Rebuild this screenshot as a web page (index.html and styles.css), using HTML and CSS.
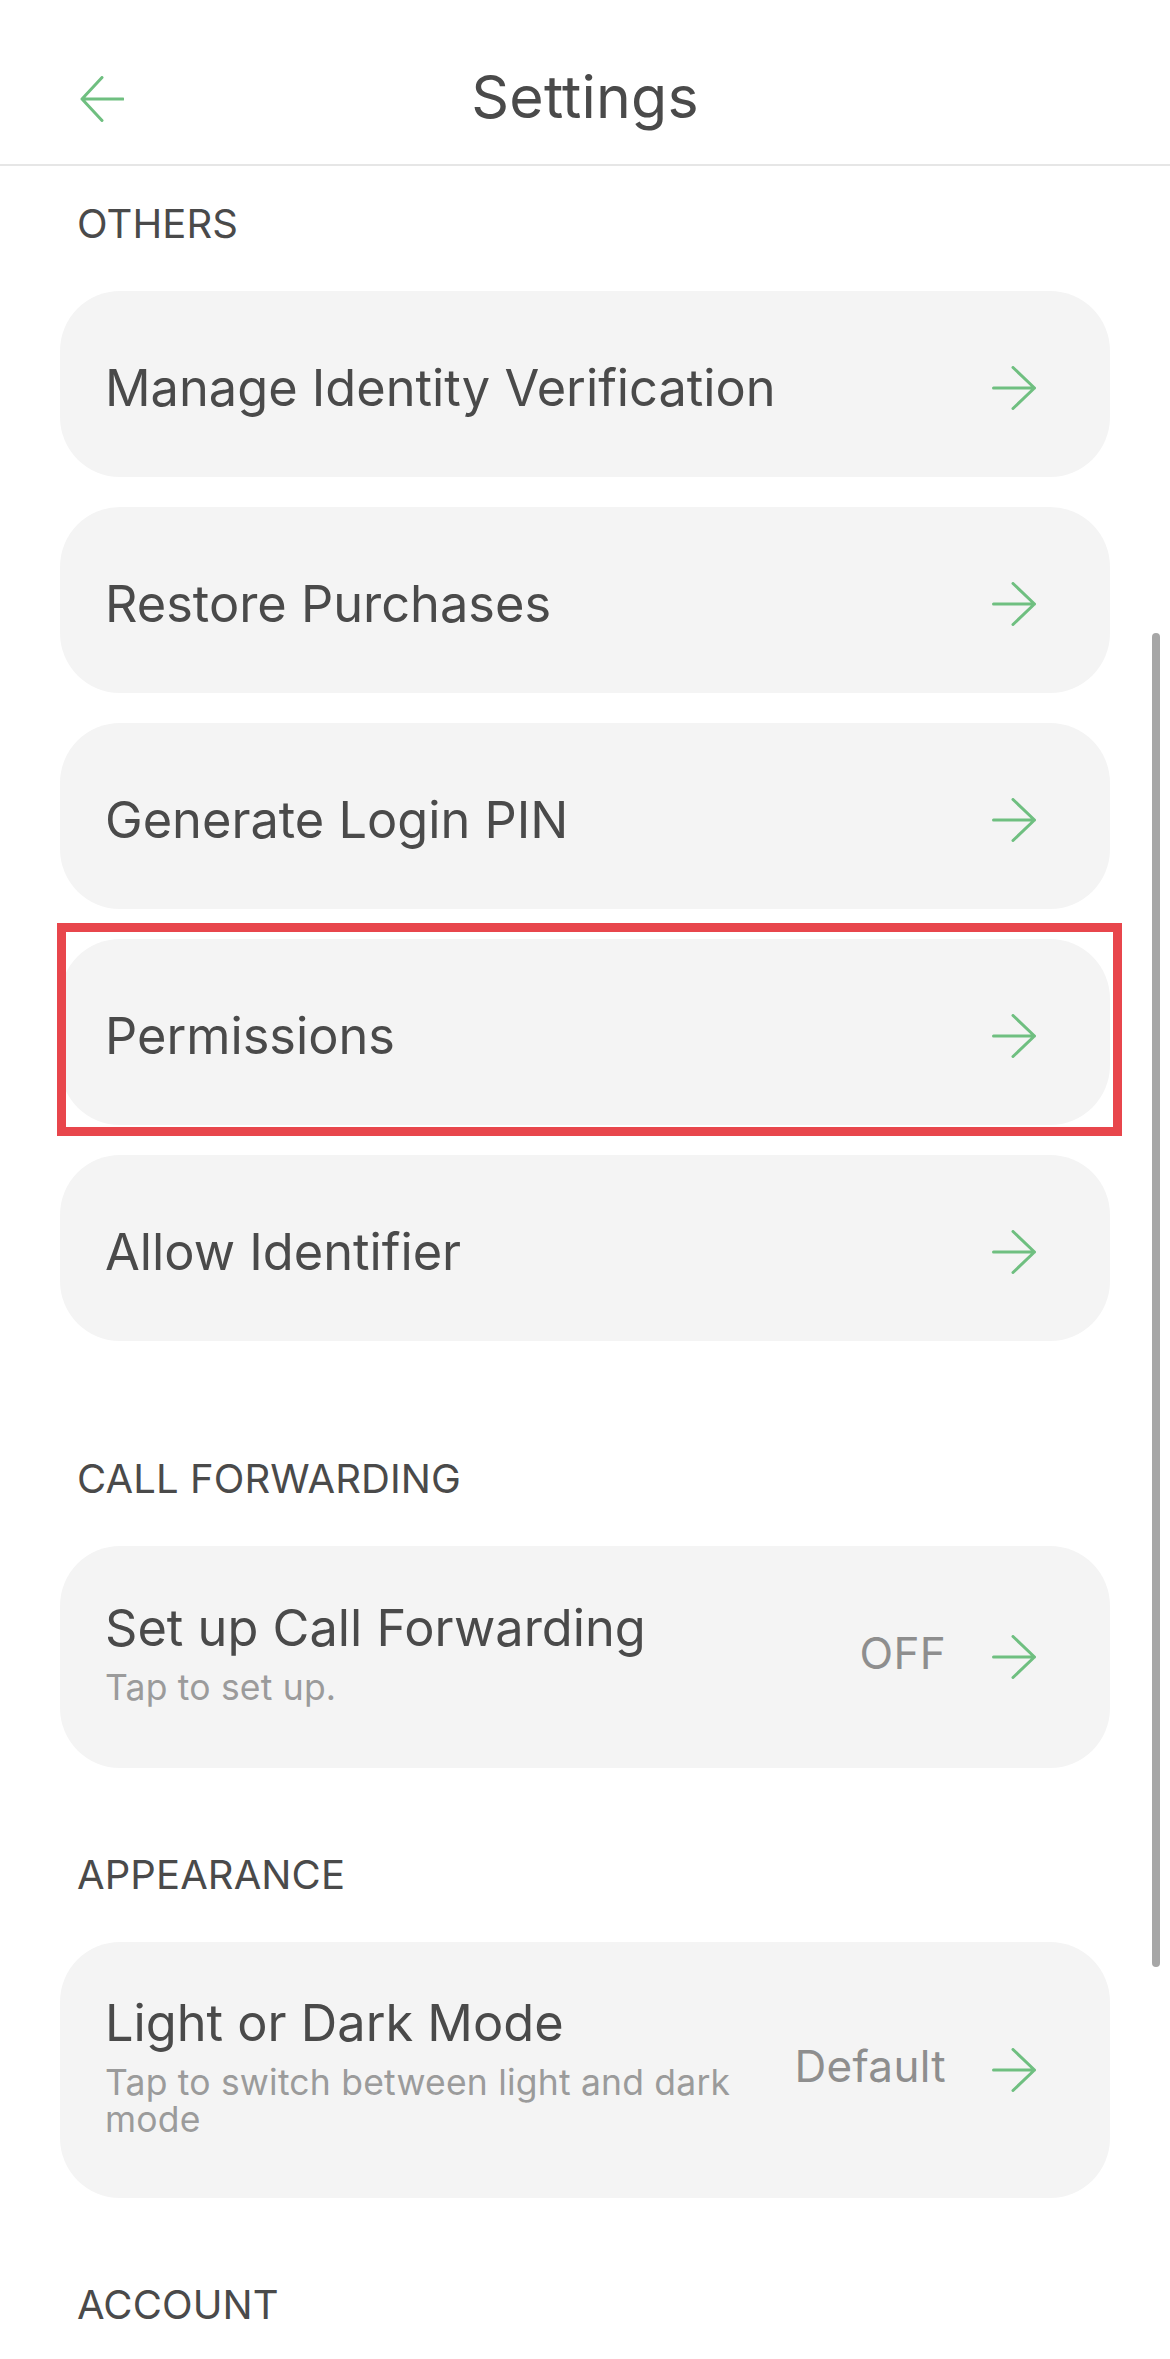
FILE: index.html
```html
<!DOCTYPE html>
<html lang="en">
<head>
<meta charset="utf-8">
<title>Settings</title>
<link rel="stylesheet" href="styles.css">
</head>
<body>
<header class="topbar">
  <div class="topbar-left">
    <svg class="back" width="44" height="46" viewBox="0 0 44 46" aria-hidden="true">
      <path d="M43 23 H2 M22 1.5 L2 23 L22 44.5" fill="none" stroke="#6fbf80" stroke-width="3" stroke-linecap="round" stroke-linejoin="round"/>
    </svg>
  </div>
  <h1 class="title">Settings</h1>
  <div class="topbar-right"></div>
</header>

<main class="content">
  <section class="section">
    <h2 class="section-label first">OTHERS</h2>
    <div class="list list-others">
      <div class="card">
        <div class="card-text"><div class="card-title">Manage Identity Verification</div></div>
        <svg class="go" width="44" height="44" viewBox="0 0 44 44" aria-hidden="true"><path d="M1.5 22 H42.5 M21 1.5 L42.5 22 L21 42.5" fill="none" stroke="#6fbf80" stroke-width="3" stroke-linecap="round" stroke-linejoin="round"/></svg>
      </div>
      <div class="card">
        <div class="card-text"><div class="card-title">Restore Purchases</div></div>
        <svg class="go" width="44" height="44" viewBox="0 0 44 44" aria-hidden="true"><path d="M1.5 22 H42.5 M21 1.5 L42.5 22 L21 42.5" fill="none" stroke="#6fbf80" stroke-width="3" stroke-linecap="round" stroke-linejoin="round"/></svg>
      </div>
      <div class="card">
        <div class="card-text"><div class="card-title">Generate Login PIN</div></div>
        <svg class="go" width="44" height="44" viewBox="0 0 44 44" aria-hidden="true"><path d="M1.5 22 H42.5 M21 1.5 L42.5 22 L21 42.5" fill="none" stroke="#6fbf80" stroke-width="3" stroke-linecap="round" stroke-linejoin="round"/></svg>
      </div>
      <div class="card highlighted">
        <div class="card-text"><div class="card-title">Permissions</div></div>
        <svg class="go" width="44" height="44" viewBox="0 0 44 44" aria-hidden="true"><path d="M1.5 22 H42.5 M21 1.5 L42.5 22 L21 42.5" fill="none" stroke="#6fbf80" stroke-width="3" stroke-linecap="round" stroke-linejoin="round"/></svg>
        <span class="highlight-box"></span>
      </div>
      <div class="card">
        <div class="card-text"><div class="card-title">Allow Identifier</div></div>
        <svg class="go" width="44" height="44" viewBox="0 0 44 44" aria-hidden="true"><path d="M1.5 22 H42.5 M21 1.5 L42.5 22 L21 42.5" fill="none" stroke="#6fbf80" stroke-width="3" stroke-linecap="round" stroke-linejoin="round"/></svg>
      </div>
    </div>
  </section>

  <section class="section">
    <h2 class="section-label">CALL FORWARDING</h2>
    <div class="list">
      <div class="card card-detail card-forward">
        <div class="card-text">
          <div class="card-title">Set up Call Forwarding</div>
          <div class="card-sub">Tap to set up.</div>
        </div>
        <span class="card-value">OFF</span>
        <svg class="go" width="44" height="44" viewBox="0 0 44 44" aria-hidden="true"><path d="M1.5 22 H42.5 M21 1.5 L42.5 22 L21 42.5" fill="none" stroke="#6fbf80" stroke-width="3" stroke-linecap="round" stroke-linejoin="round"/></svg>
      </div>
    </div>
  </section>

  <section class="section">
    <h2 class="section-label">APPEARANCE</h2>
    <div class="list">
      <div class="card card-detail card-mode">
        <div class="card-text">
          <div class="card-title">Light or Dark Mode</div>
          <div class="card-sub">Tap to switch between light and dark mode</div>
        </div>
        <span class="card-value">Default</span>
        <svg class="go" width="44" height="44" viewBox="0 0 44 44" aria-hidden="true"><path d="M1.5 22 H42.5 M21 1.5 L42.5 22 L21 42.5" fill="none" stroke="#6fbf80" stroke-width="3" stroke-linecap="round" stroke-linejoin="round"/></svg>
      </div>
    </div>
  </section>

  <section class="section">
    <h2 class="section-label">ACCOUNT</h2>
  </section>
</main>

<div class="scrollbar"></div>
</body>
</html>
```

FILE: styles.css
```css
* {
  box-sizing: border-box;
}

html, body {
  margin: 0;
  padding: 0;
  background: #ffffff;
}

body {
  font-family: Inter, "Noto Sans", "Liberation Sans", sans-serif;
  color: #4a4a4a;
  width: 1170px;
  min-height: 2359px;
  overflow: hidden;
  position: relative;
}

.topbar {
  height: 166px;
  border-bottom: 2px solid #e6e6e6;
  display: grid;
  grid-template-columns: 1fr auto 1fr;
  align-items: center;
  padding-top: 30px;
}

.topbar-left {
  padding-left: 80px;
  display: flex;
  align-items: center;
}

.back {
  display: block;
  margin-top: 4px;
}

.title {
  margin: 0;
  font-size: 59px;
  font-weight: 400;
  line-height: 70px;
  color: #4a4a4a;
  letter-spacing: 0.2px;
}

.content {
  padding: 0 60px;
}

.section-label {
  margin: 84px 0 44px 17px;
  font-size: 40px;
  font-weight: 400;
  line-height: 46px;
  color: #4a4a4a;
  letter-spacing: 0.1px;
}

.section-label.first {
  margin-top: 35px;
}

.list {
  display: flex;
  flex-direction: column;
  gap: 30px;
}

.list-others {
  padding-bottom: 31px;
}

.card {
  position: relative;
  min-height: 186px;
  background: #f4f4f4;
  border-radius: 60px;
  display: flex;
  align-items: center;
  padding: 8px 74px 0 45px;
}

.card-text {
  flex: 1;
  min-width: 0;
}

.card-title {
  font-size: 50.5px;
  line-height: 68px;
  color: #4a4a4a;
  letter-spacing: 0;
  white-space: nowrap;
}

.card-sub {
  margin-top: 7px;
  font-size: 35.5px;
  line-height: 37px;
  color: #9b9b9b;
  letter-spacing: 0.2px;
}

.card-detail {
  padding-top: 0;
}

.card-detail .card-text {
  margin-bottom: 14px;
}

.card-forward {
  min-height: 222px;
}

.card-mode {
  min-height: 256px;
}

.card-mode .card-text {
  padding-right: 40px;
}

.card-value {
  font-size: 44px;
  line-height: 52px;
  color: #8e8e8e;
  margin-right: 46px;
  margin-bottom: 8px;
  letter-spacing: 0.3px;
}

.go {
  display: block;
  flex: none;
}

.highlight-box {
  position: absolute;
  top: -16px;
  right: -12px;
  bottom: -11px;
  left: -3px;
  border: 9px solid #e8464c;
  pointer-events: none;
}

.scrollbar {
  position: absolute;
  left: 1152px;
  top: 633px;
  width: 8px;
  height: 1334px;
  border-radius: 4px;
  background: #a6a6a6;
}
```
